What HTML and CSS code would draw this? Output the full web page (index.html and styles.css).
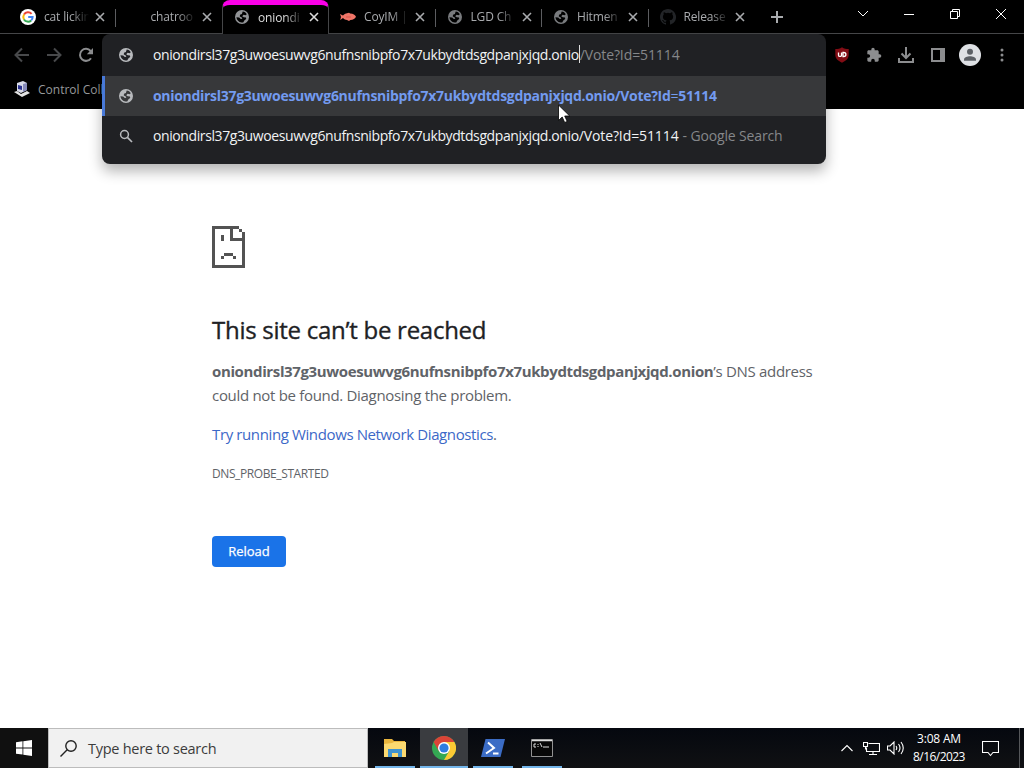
FILE: index.html
```html
<!DOCTYPE html>
<html lang="en">
<head>
    <meta charset="UTF-8">
    <meta name="viewport" content="width=device-width, initial-scale=1.0">
    <title>oniondirsl37g3uwoesuwvg6nufnsnibpfo7x7ukbydtdsgdpanjxjqd.onion</title>
    <link rel="stylesheet" href="styles.css">
</head>
<body>
    <!-- shared icons -->
    <svg class="sprite" width="0" height="0">
        <symbol id="globe" viewBox="0 0 16 16">
            <path fill-rule="evenodd" d="M8 1a7 7 0 1 0 0 14A7 7 0 0 0 8 1zM8.700 2.600C10.500 2.800 12 3.800 12.800 5.200L11.500 6.300 9.600 5.800 8.200 7.200 9.700 8.200 12 8.400 12.200 10 10.500 11.300 9.200 13.400 7.500 13.500C4.800 13 2.700 11.200 2.400 8.200L5.200 8.500 6.800 10 8.300 9.800 7.800 8.600 5.800 7.400 6 5.800 7.900 5z" fill="currentColor"/>
        </symbol>
        <symbol id="close" viewBox="0 0 10 10">
            <path d="M1 1l8 8M9 1l-8 8" stroke="currentColor" stroke-width="1.6" fill="none"/>
        </symbol>
    </svg>

    <div class="window">
        <header class="tab-strip">
            <div class="tab">
                <svg class="favicon" viewBox="0 0 16 16">
                    <circle cx="8" cy="8" r="8" fill="#fff"/>
                    <g fill="none" stroke-width="2">
                        <path d="M11.6 4.9A4.7 4.7 0 0 0 4 5.6" stroke="#ea4335"/>
                        <path d="M4 5.6a4.7 4.7 0 0 0 0 4.8" stroke="#fbbc05"/>
                        <path d="M4 10.4a4.7 4.7 0 0 0 7.2 1" stroke="#34a853"/>
                        <path d="M11.2 11.4A4.6 4.6 0 0 0 12.6 8H8.2" stroke="#4285f4"/>
                    </g>
                </svg>
                <span class="title">cat lickin</span>
                <svg class="close"><use href="#close"/></svg>
            </div>
            <div class="tab no-line">
                <span class="favicon"></span>
                <span class="title">chatroo</span>
                <svg class="close"><use href="#close"/></svg>
            </div>
            <div class="tab active">
                <svg class="favicon"><use href="#globe"/></svg>
                <span class="title">oniondi</span>
                <svg class="close"><use href="#close"/></svg>
            </div>
            <div class="tab">
                <svg class="favicon" viewBox="0 0 16 16">
                    <path d="M0 5l3 1.500C4.500 5 6 4.300 7 4.300L9 3.800l1.200.7c3 .3 5 1.300 5.800 3.200-.8 2-2.800 3.100-5.600 3.200L9 12l-2-.9c-1.500 0-3-.8-4-2L.2 11 1 8z" fill="#f07568"/>
                    <path d="M6 8h5" stroke="#d9564b" fill="none"/>
                </svg>
                <span class="title">CoyIM |</span>
                <svg class="close"><use href="#close"/></svg>
            </div>
            <div class="tab">
                <svg class="favicon"><use href="#globe"/></svg>
                <span class="title">LGD Ch</span>
                <svg class="close"><use href="#close"/></svg>
            </div>
            <div class="tab">
                <svg class="favicon"><use href="#globe"/></svg>
                <span class="title">Hitmen</span>
                <svg class="close"><use href="#close"/></svg>
            </div>
            <div class="tab no-line">
                <svg class="favicon github" viewBox="0 0 16 16">
                    <path d="M8 0C3.580 0 0 3.580 0 8c0 3.540 2.290 6.530 5.470 7.590.4.070.55-.17.55-.38v-1.490c-2.010.37-2.530-.49-2.690-.94-.09-.23-.48-.94-.82-1.130-.28-.15-.68-.52-.01-.53.63-.01 1.080.58 1.230.82.72 1.210 1.870.87 2.330.66.07-.52.28-.87.51-1.070-1.780-.2-3.640-.89-3.640-3.950 0-.87.31-1.590.82-2.150-.08-.2-.36-1.020.08-2.120 0 0 .67-.21 2.200.82a7.500 7.500 0 0 1 4 0c1.530-1.040 2.200-.82 2.200-.82.44 1.100.16 1.920.08 2.120.51.56.82 1.270.82 2.150 0 3.070-1.870 3.750-3.650 3.950.29.25.54.73.54 1.480v2.200c0 .21.15.46.55.38A8 8 0 0 0 8 0z" fill="currentColor"/>
                </svg>
                <span class="title">Release</span>
                <svg class="close"><use href="#close"/></svg>
            </div>
            <svg class="new-tab" viewBox="0 0 12 12"><path d="M6 0v12M0 6h12" stroke="currentColor" stroke-width="2"/></svg>
            <div class="window-controls">
                <span><svg width="12" height="8" viewBox="0 0 12 8"><path d="M1 1l5 5 5-5"/></svg></span>
                <span><svg width="12" height="12" viewBox="0 0 12 12"><path d="M1 6.500h10"/></svg></span>
                <span><svg width="12" height="12" viewBox="0 0 12 12"><path d="M1.500 3.500h7v7h-7zM3.500 3.500v-2h7v7h-2"/></svg></span>
                <span><svg width="12" height="12" viewBox="0 0 12 12"><path d="M1 1l10 10M11 1L1 11"/></svg></span>
            </div>
        </header>

        <div class="toolbar">
            <span class="tool dim"><svg width="16" height="16" viewBox="0 0 16 16"><path d="M15 8H2M8 1.500L1.500 8 8 14.500"/></svg></span>
            <span class="tool dim"><svg width="16" height="16" viewBox="0 0 16 16"><path d="M1 8h13M8 1.500L14.500 8 8 14.500"/></svg></span>
            <span class="tool"><svg width="16" height="16" viewBox="0 0 16 16"><path d="M13 11.200A6 6 0 1 1 12.600 4L14 5.500"/><path class="solid" d="M15 1v6.200H8.800z"/></svg></span>
            <div class="tools-right">
                <span class="tool">
                    <svg width="14" height="16" viewBox="0 0 14 16">
                        <path class="shield" d="M7 .3C5 1.800 2.600 2 .3 2v6c0 3.800 3.200 6 6.700 7.700C10.500 14 13.700 11.800 13.700 8V2C11.400 2 9 1.800 7 .3z"/>
                        <path class="shield-mark" d="M3.500 5.500v2.700c0 1.600 3 1.600 3 0V5.500M8 5.500v4h.8c2.800 0 2.800-4 0-4z"/>
                    </svg>
                </span>
                <span class="tool"><svg width="16" height="16" viewBox="0 0 24 24"><path class="solid" d="M20.500 11H19V7c0-1.100-.9-2-2-2h-4V3.500a2.500 2.500 0 0 0-5 0V5H4c-1.100 0-2 .9-2 2v3.800h1.500a2.700 2.700 0 0 1 0 5.400H2V20c0 1.100.9 2 2 2h3.800v-1.500a2.700 2.700 0 0 1 5.400 0V22H17c1.100 0 2-.9 2-2v-4h1.500a2.500 2.500 0 0 0 0-5z"/></svg></span>
                <span class="tool"><svg width="16" height="16" viewBox="0 0 16 16"><path d="M8 0v11M3.500 6.500L8 11l4.500-4.500M1 11v4h14v-4"/></svg></span>
                <span class="tool"><svg width="14" height="14" viewBox="0 0 14 14"><path d="M1 1h12v12H1z"/><path class="solid" d="M9 1h5v12H9z"/></svg></span>
                <span class="tool"><svg width="22" height="22" viewBox="0 0 22 22"><circle class="avatar" cx="11" cy="11" r="11"/><circle class="person" cx="11" cy="7.800" r="3"/><path class="person" d="M5 16.800v-1.300c0-2.200 3.500-3.300 6-3.300s6 1.100 6 3.300v1.300z"/></svg></span>
                <span class="tool"><svg width="4" height="14" viewBox="0 0 4 14"><circle class="solid" cx="2" cy="2" r="1.500"/><circle class="solid" cx="2" cy="7" r="1.500"/><circle class="solid" cx="2" cy="12" r="1.500"/></svg></span>
            </div>
        </div>

        <div class="bookmarks">
            <svg width="16" height="16" viewBox="0 0 16 16">
                <path d="M3 2l6-2 4 2v7l-6 3-4-2z" fill="#d8dae8"/>
                <path d="M9 3l4-1v7l-4 2z" fill="#8589b8"/>
                <path d="M4 4l4 1v4L4 8z" fill="#29308f"/>
                <path d="M0 11l3-1 4 3 6-3 3 2-8 4z" fill="#e4e4e4"/>
            </svg>
            <span>Control Colle</span>
        </div>

        <div class="omnibox">
            <div class="row input">
                <svg class="row-icon"><use href="#globe"/></svg>
                <span class="url typed">oniondirsl37g3uwoesuwvg6nufnsnibpfo7x7ukbydtdsgdpanjxjqd.onio</span><span class="caret"></span><span class="completion">/Vote?Id=51114</span>
            </div>
            <div class="row selected">
                <svg class="row-icon"><use href="#globe"/></svg>
                <span class="match">oniondirsl37g3uwoesuwvg6nufnsnibpfo7x7ukbydtdsgdpanjxjqd.onio/Vote?Id<i>=</i>51114</span>
            </div>
            <div class="row">
                <svg class="row-icon" viewBox="0 0 16 16"><circle cx="6.500" cy="6.500" r="3.900" fill="none" stroke="currentColor" stroke-width="1.500"/><path d="M9.400 9.400l4.600 4.600" stroke="currentColor" stroke-width="1.700"/></svg>
                <span class="url typed">oniondirsl37g3uwoesuwvg6nufnsnibpfo7x7ukbydtdsgdpanjxjqd.onio</span><span class="url path">/Vote?Id=51114</span><span class="hint">- Google Search</span>
            </div>
        </div>

        <svg class="cursor" viewBox="0 0 12 19"><path d="M.5 1v15.500l3.700-3.500 2.500 5.500 2.500-1.100-2.500-5.400h5z" fill="#fff" stroke="#000" stroke-width=".8"/></svg>

        <main class="page">
            <div class="error">
                <svg class="sad" viewBox="0 0 11 14" shape-rendering="crispEdges">
                    <path d="M0 0h9v1H7v3h4v10H0zM1 1v12h9V5H6V1zM9 1h1v1H9zM10 2h1v2h-1zM3 3h1v2H3zM4 9h3v1H4zM3 10h1v1H3zM7 10h1v1H7z" fill="#535353" fill-rule="evenodd"/>
                </svg>
                <h1>This site can’t be reached</h1>
                <p class="summary"><strong>oniondirsl37g3uwoesuwvg6nufnsnibpfo7x7ukbydtdsgdpanjxjqd.onion</strong><span class="rest">’s DNS address</span><br>could not be found. Diagnosing the problem.</p>
                <p class="suggestion"><a href="#">Try running Windows Network Diagnostics</a>.</p>
                <div class="error-code">DNS_PROBE_STARTED</div>
                <button class="reload">Reload</button>
            </div>
        </main>

        <footer class="taskbar">
            <div class="start"><svg width="16" height="16" viewBox="0 0 16 16"><path d="M0 2.300L6.500 1.300v6.200H0zM7.300 1.200L16 0v7.500H7.300zM0 8.400h6.500v6.200L0 13.700zM7.300 8.400H16V16l-8.700-1.200z" fill="#fff"/></svg></div>
            <div class="search">
                <svg width="17" height="17" viewBox="0 0 17 17"><circle cx="11" cy="6" r="5.200"/><path d="M7.200 9.800L.5 16.500"/></svg>
                <span>Type here to search</span>
            </div>
            <div class="apps">
                <div class="app">
                    <svg width="22" height="18" viewBox="0 0 22 18"><path d="M0 0h8l2 2h11v16H0z" fill="#e9b53d"/><path d="M0 5l8-1 2-1h12v15H0z" fill="#fbd970"/><path d="M4 10h14v8h-4v-4H8v4H4z" fill="#3f93cf"/></svg>
                </div>
                <div class="app current">
                    <svg width="24" height="24" viewBox="0 0 24 24">
                        <circle cx="12" cy="12" r="12" fill="#34a853"/>
                        <path d="M1.600 6A12 12 0 0 1 22.400 6H12L6.800 15z" fill="#db4437"/>
                        <path d="M22.400 6A12 12 0 0 1 12 24l5.200-9L12 6z" fill="#fcc934"/>
                        <circle cx="12" cy="12" r="6" fill="#fff"/>
                        <circle cx="12" cy="12" r="4.600" fill="#2f7de1"/>
                    </svg>
                </div>
                <div class="app">
                    <svg width="24" height="18" viewBox="0 0 24 18"><path d="M4.500 0H24l-4.500 18H0z" fill="#3b6cc5"/><path d="M7 3.500l6 5.500-8 5.500M12 14.500h5.500" stroke="#fff" stroke-width="2" fill="none"/></svg>
                </div>
                <div class="app">
                    <svg width="22" height="18" viewBox="0 0 22 18"><path d="M.5.500h21v17H.5z" fill="#080808" stroke="#929292"/><path d="M1 1.500h20" stroke="#ddd" stroke-width="1.500"/><path d="M5 5H3v3h2M7 5v1M7 7v1M9 4l2 4M12 8h6" stroke="#ddd" fill="none"/></svg>
                </div>
            </div>
            <div class="tray">
                <svg class="up" width="12" height="8" viewBox="0 0 12 8"><path d="M.5 7L6 1.500 11.500 7"/></svg>
                <svg width="17" height="15" viewBox="0 0 17 15"><path d="M5.500 2.500h11v8H3.500v-4M10 10.500v3M6 13.500h8M.5 1.500h4v4h-4zM2.500 5.500v3"/></svg>
                <svg width="17" height="14" viewBox="0 0 17 14"><path d="M.5 5h2.500l4-4v12l-4-4H.5zM9 5q1.500 2 0 4M11.500 3q3 4 0 8M14 1q4.500 6 0 12"/></svg>
                <div class="clock"><span>3:08 AM</span><span class="date">8/16/2023</span></div>
                <svg class="notes" width="17" height="17" viewBox="0 0 17 17"><path d="M.5 1.500h16v11h-5.500L8.500 15.500 6 12.500H.5z"/></svg>
            </div>
        </footer>
    </div>
</body>
</html>
```
FILE: styles.css
```css
* {
    box-sizing: border-box;
}
body {
    margin: 0;
    background: #fff;
    font-family: "Open Sans", "Noto Sans", sans-serif;
}
svg {
    display: block;
    flex: none;
}
.sprite {
    position: absolute;
}
.window {
    position: relative;
    display: flex;
    flex-direction: column;
    width: 1024px;
    height: 768px;
    overflow: hidden;
}

/* tabs */
.tab-strip {
    display: flex;
    height: 34px;
    padding-left: 9px;
    background: #000;
    border-bottom: 1px solid #454648;
    color: #a9abae;
}
.tab {
    display: flex;
    align-items: center;
    width: 106.5px;
    height: 33px;
    padding-left: 11px;
    background: linear-gradient(#5c5d60, #5c5d60) right 9px / 1px 18px no-repeat;
}
.tab.no-line {
    background: none;
}
.tab.active {
    height: 34px;
    width: 107px;
    background: #000;
    border: 1px solid #454648;
    border-top: 5px solid #fb00e8;
    border-bottom: none;
    border-radius: 8px 8px 0 0;
    padding: 0 0 5px 11px;
    color: #ddd;
}
.favicon {
    flex: none;
    width: 16px;
    height: 16px;
    color: #797b7e;
}
.active .favicon {
    color: #929497;
}
.favicon.github {
    color: #222427;
}
.title {
    flex: none;
    width: 45px;
    margin-left: 8px;
    white-space: nowrap;
    font-size: 12px;
    letter-spacing: -0.15px;
    -webkit-mask-image: linear-gradient(90deg, #000 60%, transparent);
    mask-image: linear-gradient(90deg, #000 60%, transparent);
}
.close {
    width: 10px;
    height: 10px;
    margin-left: 6px;
}
.new-tab {
    width: 12px;
    height: 12px;
    margin: 11px 0 0 16px;
}
.window-controls {
    display: flex;
    height: 28px;
    margin-left: auto;
}
.window-controls span {
    display: grid;
    place-items: center;
    width: 46px;
}
.window-controls svg {
    fill: none;
    stroke: #fff;
}

/* toolbar */
.toolbar {
    display: flex;
    height: 42px;
    padding: 0 6px;
    background: #000;
}
.tools-right {
    display: flex;
    margin-left: auto;
}
.tool {
    display: grid;
    place-items: center;
    width: 32px;
    height: 42px;
    color: #8c8d8f;
}
.tool.dim {
    color: #48494b;
}
.tool svg {
    fill: none;
    stroke: currentColor;
    stroke-width: 2;
}
.tool .solid {
    fill: currentColor;
    stroke: none;
}
.tool .shield {
    fill: #820d15;
    stroke: none;
}
.tool .shield-mark {
    stroke: #fff;
    stroke-width: 1.3;
}
.tool .avatar {
    fill: #dfe1e5;
    stroke: none;
}
.tool .person {
    fill: #5c6066;
    stroke: none;
}
.bookmarks {
    display: flex;
    align-items: center;
    height: 33px;
    padding: 0 0 7px 14px;
    background: #000;
    color: #97999c;
    font-size: 12px;
}
.bookmarks span {
    margin-left: 8px;
}

/* omnibox dropdown */
.omnibox {
    position: absolute;
    left: 102px;
    top: 34px;
    width: 724px;
    height: 130px;
    background: #202124;
    border-radius: 8px;
    box-shadow: 0 7px 14px rgba(0, 0, 0, 0.3);
    overflow: hidden;
    color: #f1f3f4;
    font-size: 14px;
}
.row {
    display: flex;
    align-items: center;
    height: 40px;
    padding-left: 16px;
    white-space: nowrap;
}
.row.input {
    height: 42px;
}
.row.selected {
    padding-left: 13px;
    background: #37383a;
    border-left: 3px solid #4879d8;
}
.row-icon {
    width: 16px;
    height: 16px;
    margin-right: 19px;
    color: #b8babd;
}
.row span {
    margin-bottom: 2px;
}
.url.typed {
    letter-spacing: -0.4px;
}
.url.path {
    letter-spacing: -0.1px;
}
.completion,
.hint {
    color: #85878a;
}
.completion {
    letter-spacing: -0.1px;
}
.caret {
    width: 1px;
    height: 18px;
    background: #ddd;
}
.match {
    color: #739bf0;
    font-weight: 700;
    letter-spacing: -0.3px;
}
.match i {
    font-style: normal;
    font-weight: 400;
}
.hint {
    margin-left: 4px;
    letter-spacing: -0.15px;
}
.cursor {
    position: absolute;
    left: 558px;
    top: 104px;
    width: 12px;
    height: 19px;
}

/* error page */
.page {
    flex: 1;
    padding-left: 212px;
    background: #fff;
    color: #5f6368;
}
.error {
    display: flex;
    flex-direction: column;
    align-items: flex-start;
    width: 602px;
    padding-top: 117px;
    font-size: 15px;
    line-height: 24px;
}
.sad {
    width: 33px;
    height: 42px;
}
h1 {
    margin: 47px 0 15px;
    color: #202124;
    font-size: 24px;
    font-weight: 500;
    line-height: 29px;
    letter-spacing: -0.27px;
    -webkit-text-stroke: 0.35px #202124;
}
p {
    margin: 0 0 15px;
    white-space: nowrap;
    letter-spacing: -0.31px;
}
.summary strong {
    letter-spacing: -0.37px;
}
.suggestion {
    letter-spacing: -0.38px;
}
a {
    color: #3c68c7;
    text-decoration: none;
}
.error-code {
    padding-top: 1px;
    font-size: 12px;
    letter-spacing: -0.4px;
}
.reload {
    width: 74px;
    height: 31px;
    margin-top: 50px;
    padding: 0 0 2px;
    background: #1a73e8;
    border: 0;
    border-radius: 4px;
    color: #fff;
    font: 500 13px "Open Sans", sans-serif;
    -webkit-text-stroke: 0.25px #fff;
}

/* taskbar */
.taskbar {
    display: flex;
    height: 40px;
    background: linear-gradient(#05080f, #101113);
    color: #fff;
}
.start {
    display: grid;
    place-items: center;
    width: 48px;
    background: #101010;
}
.search {
    display: flex;
    align-items: center;
    width: 320px;
    padding-left: 11px;
    background: #f1f1f1;
    border: 1px solid #bcbcbc;
    color: #3c3c3c;
    font-size: 14.5px;
    letter-spacing: -0.27px;
}
.search svg {
    fill: none;
    stroke: #222;
    stroke-width: 1.4;
}
.search span {
    margin-left: 11px;
}
.apps {
    display: flex;
    gap: 1px;
    margin-left: 3px;
}
.app {
    display: grid;
    place-items: center;
    width: 48px;
    background: linear-gradient(#73b5ea, #73b5ea) center bottom / 40px 2px no-repeat;
}
.app.current {
    background: linear-gradient(#73b5ea, #73b5ea) center bottom / 48px 2px no-repeat #3a3c40;
}
.tray {
    display: flex;
    align-items: center;
    margin-left: auto;
    padding-right: 20px;
    margin-right: 4px;
    border-right: 1px solid #55575a;
}
.tray svg {
    fill: none;
    stroke: #fff;
    stroke-width: 1.1;
}
.up {
    margin-right: 10px;
}
.tray svg + svg + svg {
    margin-left: 7px;
}
.clock {
    display: flex;
    flex-direction: column;
    align-items: center;
    width: 60px;
    margin: 0 13px 1px 5px;
    font-size: 12px;
    line-height: 18px;
    letter-spacing: -0.2px;
    white-space: nowrap;
}
.date {
    letter-spacing: -0.55px;
}
```
